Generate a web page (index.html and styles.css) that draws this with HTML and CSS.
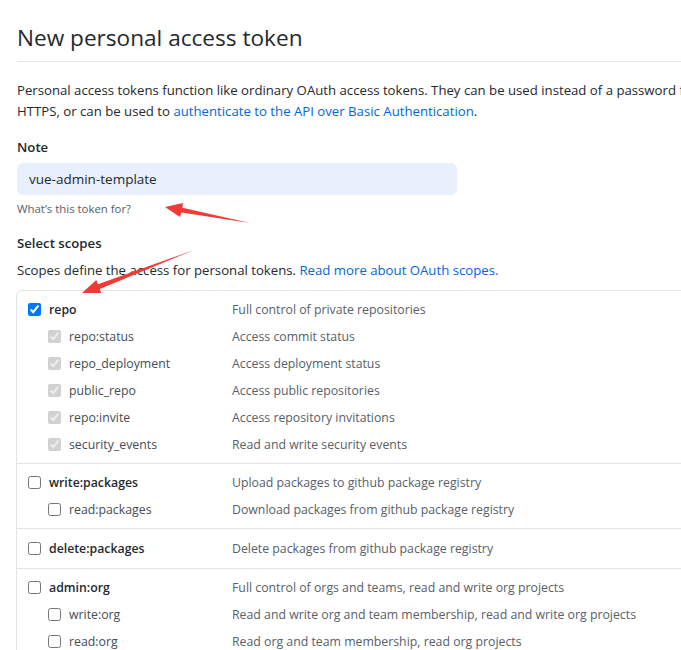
FILE: index.html
```html
<!DOCTYPE html>
<html lang="en">
<head>
<meta charset="utf-8">
<title>New personal access token</title>
<link rel="stylesheet" href="styles.css">
</head>
<body>
<div class="page">
  <h1 class="title">New personal access token</h1>
  <p class="intro">Personal access tokens function like ordinary OAuth access tokens. They can be used instead of a password for Git over HTTPS, or can be used to <a href="#">authenticate to the API over Basic Authentication</a>.</p>

  <div class="field-label">Note</div>
  <div class="note-input">vue-admin-template</div>
  <div class="hint">What’s this token for?</div>

  <div class="field-label scopes-label">Select scopes</div>
  <p class="scopes-desc">Scopes define the access for personal tokens. <a href="#">Read more about OAuth scopes.</a></p>

  <div class="scopes">
    <div class="group">
      <div class="row top"><label class="name"><input type="checkbox" checked>repo</label><span class="desc">Full control of private repositories</span></div>
      <div class="row child"><label class="name"><input type="checkbox" checked disabled>repo:status</label><span class="desc">Access commit status</span></div>
      <div class="row child"><label class="name"><input type="checkbox" checked disabled>repo_deployment</label><span class="desc">Access deployment status</span></div>
      <div class="row child"><label class="name"><input type="checkbox" checked disabled>public_repo</label><span class="desc">Access public repositories</span></div>
      <div class="row child"><label class="name"><input type="checkbox" checked disabled>repo:invite</label><span class="desc">Access repository invitations</span></div>
      <div class="row child"><label class="name"><input type="checkbox" checked disabled>security_events</label><span class="desc">Read and write security events</span></div>
    </div>
    <div class="group">
      <div class="row top"><label class="name"><input type="checkbox">write:packages</label><span class="desc">Upload packages to github package registry</span></div>
      <div class="row child"><label class="name"><input type="checkbox">read:packages</label><span class="desc">Download packages from github package registry</span></div>
    </div>
    <div class="group single">
      <div class="row top"><label class="name"><input type="checkbox">delete:packages</label><span class="desc">Delete packages from github package registry</span></div>
    </div>
    <div class="group">
      <div class="row top"><label class="name"><input type="checkbox">admin:org</label><span class="desc">Full control of orgs and teams, read and write org projects</span></div>
      <div class="row child"><label class="name"><input type="checkbox">write:org</label><span class="desc">Read and write org and team membership, read and write org projects</span></div>
      <div class="row child"><label class="name"><input type="checkbox">read:org</label><span class="desc">Read org and team membership, read org projects</span></div>
    </div>
  </div>
</div>

<svg class="arrows" width="681" height="650" viewBox="0 0 681 650" aria-hidden="true">
  <polygon points="165,207 183,203 182.3,207.8 250,223 181.4,212.4 180,217" />
  <polygon points="82,293 96.3,280.1 97.9,284.3 194,250 99.7,288.9 101.3,293.1" />
</svg>
</body>
</html>
```

FILE: styles.css
```css
html, body {
  margin: 0;
  padding: 0;
  overflow: hidden;
  background: #ffffff;
}

body {
  position: relative;
  width: 681px;
  height: 650px;
  font-family: "Open Sans", "Noto Sans", "Liberation Sans", sans-serif;
  font-size: 13.2px;
  color: #24292e;
}

.page {
  width: 820px;
  padding-left: 17px;
}

a {
  color: #0366d6;
  text-decoration: none;
}

.title {
  margin: 0;
  padding-top: 23px;
  padding-bottom: 8px;
  font-size: 22.6px;
  font-weight: 400;
  line-height: 30px;
  border-bottom: 1px solid #e1e4e8;
}

.intro {
  margin: 18px 0 0;
  line-height: 21px;
  width: 760px;
}

.field-label {
  margin-top: 15px;
  font-weight: 600;
  line-height: 21px;
}

.note-input {
  box-sizing: border-box;
  margin-top: 5px;
  width: 440px;
  height: 32px;
  padding: 0 12px;
  font-size: 13.5px;
  line-height: 32px;
  background: #e8f0fe;
  border-radius: 6px;
  color: #24292e;
}

.hint {
  margin-top: 5px;
  font-size: 11.4px;
  line-height: 18px;
  color: #586069;
}

.scopes-label {
  margin-top: 15px;
}

.scopes-desc {
  margin: 6px 0 0;
  line-height: 21px;
}

.scopes {
  margin-top: 9px;
  margin-left: -1px;
  width: 780px;
  font-size: 12.3px;
  border: 1px solid #e1e4e8;
  border-radius: 6px 0 0 0;
}

.group {
  padding: 5px 0;
}

.group.single {
  padding: 6px 0;
}

.group + .group {
  border-top: 1px solid #e1e4e8;
}

.row {
  display: grid;
  grid-template-columns: 215px 1fr;
  height: 27px;
  align-items: center;
}

.name {
  display: flex;
  align-items: center;
  gap: 8px;
  padding-left: 11px;
}

.row.top .name {
  font-weight: 600;
  color: #24292e;
}

.row.child .name {
  padding-left: 31px;
  color: #444d56;
}

.name input {
  margin: 0;
  width: 13px;
  height: 13px;
}

.desc {
  color: #586069;
}

.arrows {
  position: absolute;
  left: 0;
  top: 0;
  pointer-events: none;
}

.arrows polygon {
  fill: #ef3b36;
}
```
